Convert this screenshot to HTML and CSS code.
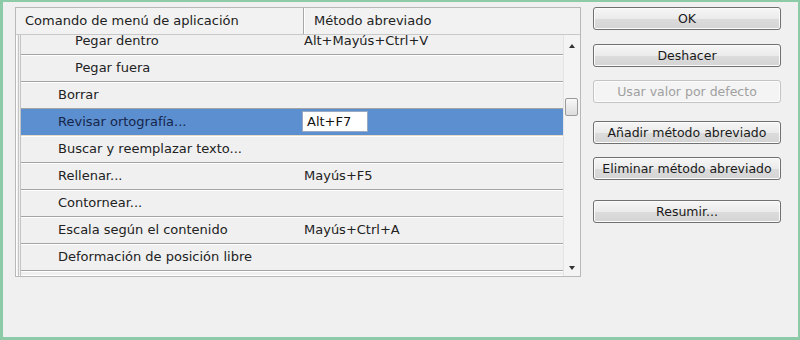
FILE: index.html
```html
<!DOCTYPE html>
<html lang="es">
<head>
    <meta charset="UTF-8">
    <title>Métodos abreviados de teclado</title>
    <link rel="stylesheet" href="styles.css">
</head>
<body>

    <div class="dialog">

        <!-- tabla de comandos -->
        <div class="table">
            <div class="table-head">
                <div class="col-cmd">Comando de menú de aplicación</div>
                <div class="col-key">Método abreviado</div>
            </div>

            <div class="table-body">
                <div class="rows">
                    <div class="row first"><span class="cmd sub">Pegar dentro</span><span class="key">Alt+Mayús+Ctrl+V</span></div>
                    <div class="row"><span class="cmd sub">Pegar fuera</span><span class="key"></span></div>
                    <div class="row"><span class="cmd">Borrar</span><span class="key"></span></div>
                    <div class="row selected"><span class="cmd">Revisar ortografía...</span><span class="key"><span class="edit">Alt+F7</span></span></div>
                    <div class="row"><span class="cmd">Buscar y reemplazar texto...</span><span class="key"></span></div>
                    <div class="row"><span class="cmd">Rellenar...</span><span class="key">Mayús+F5</span></div>
                    <div class="row"><span class="cmd">Contornear...</span><span class="key"></span></div>
                    <div class="row"><span class="cmd">Escala según el contenido</span><span class="key">Mayús+Ctrl+A</span></div>
                    <div class="row"><span class="cmd">Deformación de posición libre</span><span class="key"></span></div>
                </div>

                <div class="scrollbar">
                    <div class="arrow up"></div>
                    <div class="track">
                        <div class="thumb"></div>
                    </div>
                    <div class="arrow down"></div>
                </div>
            </div>
        </div>

        <!-- botones -->
        <div class="buttons">
            <button class="btn first">OK</button>
            <button class="btn">Deshacer</button>
            <button class="btn disabled">Usar valor por defecto</button>
            <button class="btn gap-top">Añadir método abreviado</button>
            <button class="btn">Eliminar método abreviado</button>
            <button class="btn gap-big">Resumir...</button>
        </div>

    </div>

</body>
</html>
```

FILE: styles.css
```css
/* --- GENERALE --- */
html, body {
    margin: 0;
    padding: 0;
    width: 800px;
    height: 340px;
    overflow: hidden;
    background: #f0f0f0;
    font-family: "DejaVu Sans", Verdana, sans-serif;
    font-size: 13px;
    color: #222;
}

.dialog {
    box-sizing: border-box;
    width: 800px;
    height: 340px;
    border: solid #8ccaa8;
    border-width: 2px 2px 3px 3px;
    display: flex;
    align-items: flex-start;
    padding: 5px 0 0 12px;
}

/* --- TABELLA --- */
.table {
    width: 566px;
    height: 270px;
    box-sizing: border-box;
    border: 1px solid #b8b8b8;
    box-shadow: inset 1px 1px 0 #ffffff, inset -1px -1px 0 #ffffff;
    background: #f0f0f0;
    display: flex;
    flex-direction: column;
}

.table-head {
    display: flex;
    height: 26px;
    flex: none;
    border-bottom: 1px solid #c8c8c8;
    background: #f2f2f2;
    position: relative;
    z-index: 1;
}

.col-cmd {
    width: 278px;
    padding-left: 9px;
    line-height: 26px;
    border-right: 1px solid #a8a8a8;
    box-shadow: 1px 0 0 #ffffff;
}

.col-key {
    padding-left: 10px;
    line-height: 26px;
}

.table-body {
    flex: 1;
    display: flex;
    overflow: hidden;
    border-left: 3px double #c4c4c4;
    margin-left: 2px;
}

.rows {
    flex: 1;
    overflow: hidden;
}

.row {
    display: flex;
    height: 26px;
    line-height: 26px;
    border-bottom: 1px solid #a4a4a4;
    box-shadow: 0 1px 0 #ffffff;
}

.row.first {
    margin-top: -7px;
}

.cmd {
    width: 246px;
    padding-left: 37px;
    flex: none;
}

.cmd.sub {
    padding-left: 54px;
    width: 229px;
}

.row.selected {
    background: #5b8fd0;
    color: #16254a;
    border-bottom-color: #e8dcc8;
}

.edit {
    display: inline-block;
    background: #ffffff;
    color: #111;
    width: 60px;
    height: 19px;
    line-height: 19px;
    padding-left: 4px;
    border: 1px solid #9aa8c0;
    vertical-align: middle;
    margin-left: -2px;
    margin-top: -2px;
}

/* --- SCROLLBAR --- */
.scrollbar {
    width: 16px;
    flex: none;
    display: flex;
    flex-direction: column;
    background: #f4f4f4;
    border-left: 1px solid #e4e4e4;
}

.arrow {
    height: 17px;
    flex: none;
    display: flex;
    align-items: center;
    justify-content: center;
}

.arrow.up::before {
    content: "";
    border: 3px solid transparent;
    border-bottom: 4px solid #333;
    border-top: 0;
    margin-top: 4px;
}

.arrow.down::before {
    content: "";
    border: 3px solid transparent;
    border-top: 4px solid #333;
    border-bottom: 0;
}

.track {
    flex: 1;
    padding-top: 46px;
}

.thumb {
    width: 13px;
    height: 18px;
    margin-left: 1px;
    box-sizing: border-box;
    border: 1px solid #9a9a9a;
    border-radius: 2px;
    background: linear-gradient(#f8f8f8, #dcdcdc);
}

/* --- BOTTONI --- */
.buttons {
    width: 188px;
    margin-left: 12px;
    display: flex;
    flex-direction: column;
}

.btn {
    height: 23px;
    margin-bottom: 13px;
    font-family: inherit;
    font-size: 12.5px;
    color: #1a1a1a;
    border: 1px solid #707070;
    border-radius: 3px;
    background: linear-gradient(#f6f6f6 0%, #ebebeb 50%, #dcdcdc 51%, #d4d4d4 100%);
    box-shadow: inset 0 0 0 1px #fcfcfc;
    padding: 0;
}

.btn.first {
    margin-bottom: 14px;
}

.btn.disabled {
    color: #a0a0a0;
    border-color: #c4c4c4;
    background: #f4f4f4;
}

.btn.gap-top {
    margin-top: 5px;
}

.btn.gap-big {
    margin-top: 7px;
}
```
